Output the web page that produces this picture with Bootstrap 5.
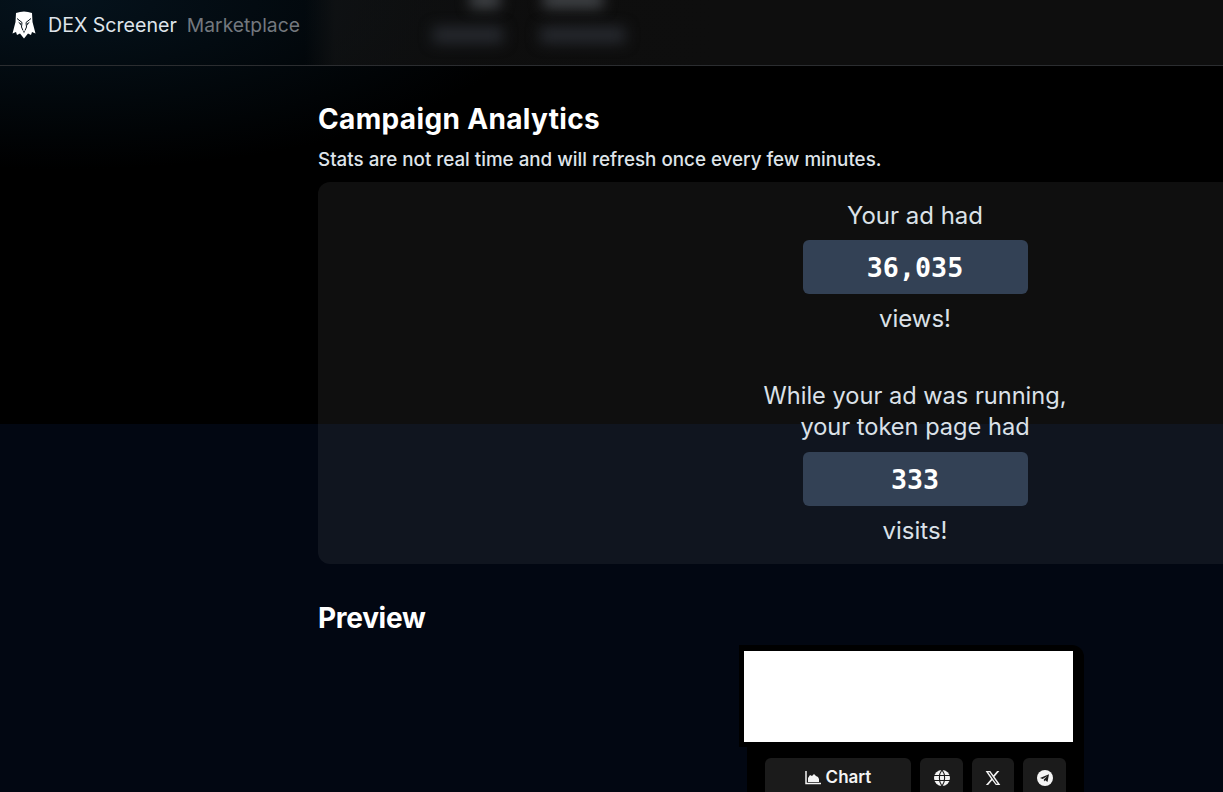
<!DOCTYPE html>
<html lang="en">
<head>
  <meta charset="UTF-8" />
  <meta name="viewport" content="width=device-width, initial-scale=1.0"/>
  <title>DEX Screener Marketplace | Campaign Analytics</title>
  <link rel="stylesheet" href="https://cdn.jsdelivr.net/npm/bootstrap@5.3.0/dist/css/bootstrap.min.css" />
  <style>
    html, body { height: 792px; overflow: hidden; }
    body {
      font-family: Inter, "Noto Sans", sans-serif;
      color: #e2e8f0;
      background:
        radial-gradient(ellipse 480px 170px at 60px 0, rgba(8, 30, 46, .62), transparent 100%),
        linear-gradient(#000 424px, #020712 424px);
    }
    .top-bar {
      height: 66px;
      background: linear-gradient(90deg, transparent 305px, rgba(24, 24, 24, .55) 335px, #0e0e0e 720px);
      border-bottom: 1px solid #2b2d30;
      padding-left: 12px;
    }
    .brand-name { font-size: 19.6px; color: #dfe4ea; margin-left: 12px; margin-top: -14px; }
    .brand-sub { font-size: 19.3px; color: #73787e; margin-left: 10px; margin-top: -14px; }
    .logo-mark { width: 24px; height: 28px; margin-top: -15px; flex-shrink: 0; }
    .blur-bit { position: absolute; height: 16px; filter: blur(7px); background: #272a30; }
    .blur-top { background: #43464a; }
    .page-main { padding: 36px 0 0 318px; width: 1512px; }
    .page-title { font-size: 28px; font-weight: 700; color: #fff; line-height: 34px; margin: 0; }
    .campaign-title { letter-spacing: .35px; }
    .page-note { font-size: 18.8px; font-weight: 500; line-height: 24px; margin: 12px 0 10px; color: #dfe4ea; }
    .stats-panel { background: rgba(255, 255, 255, .06); border-radius: 12px; height: 382px; padding-top: 18px; }
    .stat-label { font-size: 24px; line-height: 31px; color: #dbe1e8; }
    .stat-long { font-size: 23.6px; margin-bottom: 1px; }
    .stat-box {
      width: 225px; height: 54px; background: #334155; border-radius: 6px; color: #fff;
      font-family: "DejaVu Sans Mono", monospace; font-weight: 700; font-size: 26.7px; line-height: 55px;
      margin: 9px 0;
    }
    .stat-gap { height: 46px; }
    .preview-title { margin-top: 37px; letter-spacing: -.3px; }
    .preview-wrap { width: 345px; margin: 10px 0 0 421px; }
    .image-frame { background: #000; padding: 6px 11px 5px 5px; border-radius: 0 12px 0 0; }
    .image-slot { background: #fff; height: 91px; }
    .action-bar { background: #000; margin-left: 8px; padding: 11px 17px 11px 18px; gap: 9px; }
    .action-btn {
      height: 40px; background: #1b1b1b; border-radius: 6px; color: #f4f4f4; font-weight: 600; font-size: 17px; gap: 5px; flex-shrink: 0;
    }
    .action-wide { width: 146px; }
    .action-small { width: 43px; }
    .action-narrow { width: 42px; }
  </style>
</head>
<body>
  <!-- Header -->
  <header class="top-bar d-flex align-items-center position-relative">
    <svg class="logo-mark" viewBox="0 0 24 28" aria-hidden="true">
      <path fill="#fff" d="M4 2Q12-1 20 2L20.500 11 23.500 22.500 20 21 19 24 16 22.500 12 27.500 8 22.500 5 24 4 21 .5 22.500 3.500 11Z"/>
      <path fill="none" stroke="#06121a" stroke-width="1" d="M5 7.500 10 11.500 9.500 16 11 19.500M19 7.500 14 11.500 14.500 16 13 19.500"/>
      <path fill="#06121a" d="M6 10.500 9 12.500 8.800 14.500ZM18 10.500 15 12.500 15.200 14.500ZM11.200 20H12.800L12 22.500Z"/>
    </svg>
    <span class="brand-name">DEX Screener</span>
    <span class="brand-sub">Marketplace</span>
    <div class="blur-bit blur-top" style="left: 470px; top: -8px; width: 30px;"></div>
    <div class="blur-bit blur-top" style="left: 543px; top: -8px; width: 60px;"></div>
    <div class="blur-bit" style="left: 433px; top: 27px; width: 70px;"></div>
    <div class="blur-bit" style="left: 540px; top: 27px; width: 85px;"></div>
  </header>

  <main class="page-main">
    <h2 class="page-title campaign-title">Campaign Analytics</h2>
    <p class="page-note">Stats are not real time and will refresh once every few minutes.</p>

    <section class="stats-panel d-flex flex-column align-items-center text-center">
      <div class="stat-label">Your ad had</div>
      <div class="stat-box">36,035</div>
      <div class="stat-label">views!</div>
      <div class="stat-gap"></div>
      <div class="stat-label stat-long">While your ad was running,<br />your token page had</div>
      <div class="stat-box">333</div>
      <div class="stat-label">visits!</div>
    </section>

    <h2 class="page-title preview-title">Preview</h2>
    <div class="preview-wrap">
      <div class="image-frame"><div class="image-slot"></div></div>
      <div class="action-bar d-flex">
        <a class="action-btn action-wide d-flex align-items-center justify-content-center text-decoration-none" href="#">
          <svg width="16" height="14" viewBox="0 0 16 14" aria-hidden="true"><path fill="none" stroke="#f4f4f4" stroke-width="1.5" d="M1 0v12.500h15"/><path fill="#f4f4f4" d="M3 11V7l2-3 2 1 2-2 2 2 2 1 1 2v3Z"/></svg>
          Chart
        </a>
        <a class="action-btn action-small d-flex align-items-center justify-content-center" href="#">
          <svg width="16" height="16" viewBox="0 0 16 16" aria-hidden="true"><circle cx="8" cy="8" r="8" fill="#f4f4f4"/><path fill="none" stroke="#1b1b1b" stroke-width="1.1" d="M0 5.500h16M0 10.500h16M8 0C4.500 4 4.500 12 8 16M8 0c3.500 4 3.500 12 0 16"/></svg>
        </a>
        <a class="action-btn action-narrow d-flex align-items-center justify-content-center" href="#">
          <svg width="16" height="16" viewBox="0 0 24 24" aria-hidden="true"><path fill="#f4f4f4" d="M18.200 1.500h3.400l-7.400 8.500L23 22.500h-6.800l-5.400-7-6.100 7H1.300l7.900-9.100L.9 1.500h7l4.800 6.400Zm-1.200 19h1.900L6.800 3.400h-2Z"/></svg>
        </a>
        <a class="action-btn action-small d-flex align-items-center justify-content-center" href="#">
          <svg width="16" height="16" viewBox="0 0 16 16" aria-hidden="true"><circle cx="8" cy="8" r="8" fill="#f4f4f4"/><path fill="#1b1b1b" d="M3 8 12 4.300 10.500 12 8.200 10.300 7 11.500 6.800 9.400 10.300 6 5.700 9Z"/></svg>
        </a>
      </div>
    </div>
  </main>

  <script src="https://cdn.jsdelivr.net/npm/bootstrap@5.3.0/dist/js/bootstrap.bundle.min.js"></script>
</body>
</html>
